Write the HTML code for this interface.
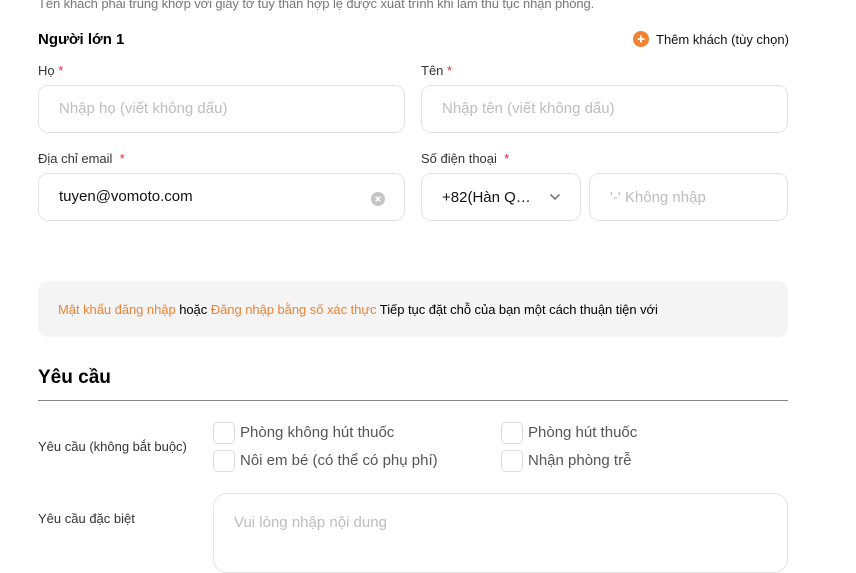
<!DOCTYPE html>
<html><head><meta charset="utf-8"><style>
*{box-sizing:border-box;margin:0;padding:0}
body{width:856px;height:540px;overflow:hidden;background:#fff;font-family:"Liberation Sans",Arial,sans-serif;position:relative;color:#222}
.a{position:absolute;white-space:nowrap}
.inp{position:absolute;border:1px solid #e3e3e3;border-radius:10px;background:#fff}
.ph{color:#bdbdbd;font-size:15px}
.lbl{font-size:13px;color:#333}
.st{color:#f5222d}
.cb{position:absolute;width:22px;height:22px;border:1px solid #dcdcdc;border-radius:5px;background:#fff}
.ct{font-size:15px;color:#555}
</style></head><body>
<div class="a" style="left:38px;top:-4px;font-size:13px;color:#777;letter-spacing:-0.1px">Tên khách phải trùng khớp với giấy tờ tùy thân hợp lệ được xuất trình khi làm thủ tục nhận phòng.</div>
<div class="a" style="left:38px;top:31px;font-size:15px;font-weight:bold;color:#000">Người lớn 1</div>
<svg class="a" style="left:633px;top:31px" width="16" height="16" viewBox="0 0 16 16"><circle cx="8" cy="8" r="8" fill="#f08232"/><path d="M8 4.5v7M4.5 8h7" stroke="#fff" stroke-width="1.8"/></svg>
<div class="a" style="left:656px;top:32px;font-size:13px;color:#111">Thêm khách (tùy chọn)</div>

<div class="a lbl" style="left:38px;top:63px">Họ <span class="st">*</span></div>
<div class="a lbl" style="left:421px;top:63px">Tên <span class="st">*</span></div>
<div class="inp" style="left:38px;top:85px;width:367px;height:48px"></div>
<div class="a ph" style="left:59px;top:100px">Nhập họ (viết không dấu)</div>
<div class="inp" style="left:421px;top:85px;width:367px;height:48px"></div>
<div class="a ph" style="left:442px;top:100px">Nhập tên (viết không dấu)</div>

<div class="a lbl" style="left:38px;top:151px">Địa chỉ email &nbsp;<span class="st">*</span></div>
<div class="a lbl" style="left:421px;top:151px">Số điện thoại &nbsp;<span class="st">*</span></div>
<div class="inp" style="left:38px;top:173px;width:367px;height:48px"></div>
<div class="a" style="left:59px;top:188px;font-size:15px;color:#111">tuyen@vomoto.com</div>
<svg class="a" style="left:371px;top:192px" width="14" height="14" viewBox="0 0 14 14"><circle cx="7" cy="7" r="7" fill="#c4c4c4"/><path d="M4.7 4.7l4.6 4.6M9.3 4.7l-4.6 4.6" stroke="#fff" stroke-width="1.6"/></svg>
<div class="inp" style="left:421px;top:173px;width:160px;height:48px"></div>
<div class="a" style="left:442px;top:189px;font-size:15px;color:#111">+82(Hàn Q…</div>
<svg class="a" style="left:549px;top:193px" width="12" height="8" viewBox="0 0 12 8"><path d="M1.5 1.5L6 6l4.5-4.5" stroke="#777" stroke-width="1.6" fill="none"/></svg>
<div class="inp" style="left:589px;top:173px;width:199px;height:48px"></div>
<div class="a ph" style="left:610px;top:189px">'-' Không nhập</div>

<div class="a" style="left:38px;top:281px;width:750px;height:56px;background:#f4f4f4;border-radius:10px"></div>
<div class="a" style="left:58px;top:302px;font-size:13px;color:#000;letter-spacing:-0.05px"><span style="color:#f08232">Mật khẩu đăng nhập</span> hoặc <span style="color:#f08232">Đăng nhập bằng số xác thực</span> Tiếp tục đặt chỗ của bạn một cách thuận tiện với</div>

<div class="a" style="left:38px;top:367px;font-size:19px;font-weight:bold;color:#000">Yêu cầu</div>
<div class="a" style="left:38px;top:400px;width:750px;height:1px;background:#888"></div>

<div class="a lbl" style="left:38px;top:439px">Yêu cầu (không bắt buộc)</div>
<div class="cb" style="left:213px;top:422px"></div><div class="a ct" style="left:240px;top:424px">Phòng không hút thuốc</div>
<div class="cb" style="left:213px;top:450px"></div><div class="a ct" style="left:240px;top:452px">Nôi em bé (có thể có phụ phí)</div>
<div class="cb" style="left:501px;top:422px"></div><div class="a ct" style="left:528px;top:424px">Phòng hút thuốc</div>
<div class="cb" style="left:501px;top:450px"></div><div class="a ct" style="left:528px;top:452px">Nhận phòng trễ</div>

<div class="a lbl" style="left:38px;top:511px">Yêu cầu đặc biệt</div>
<div class="inp" style="left:213px;top:493px;width:575px;height:80px;border-radius:14px"></div>
<div class="a ph" style="left:234px;top:514px">Vui lòng nhập nội dung</div>
</body></html>
